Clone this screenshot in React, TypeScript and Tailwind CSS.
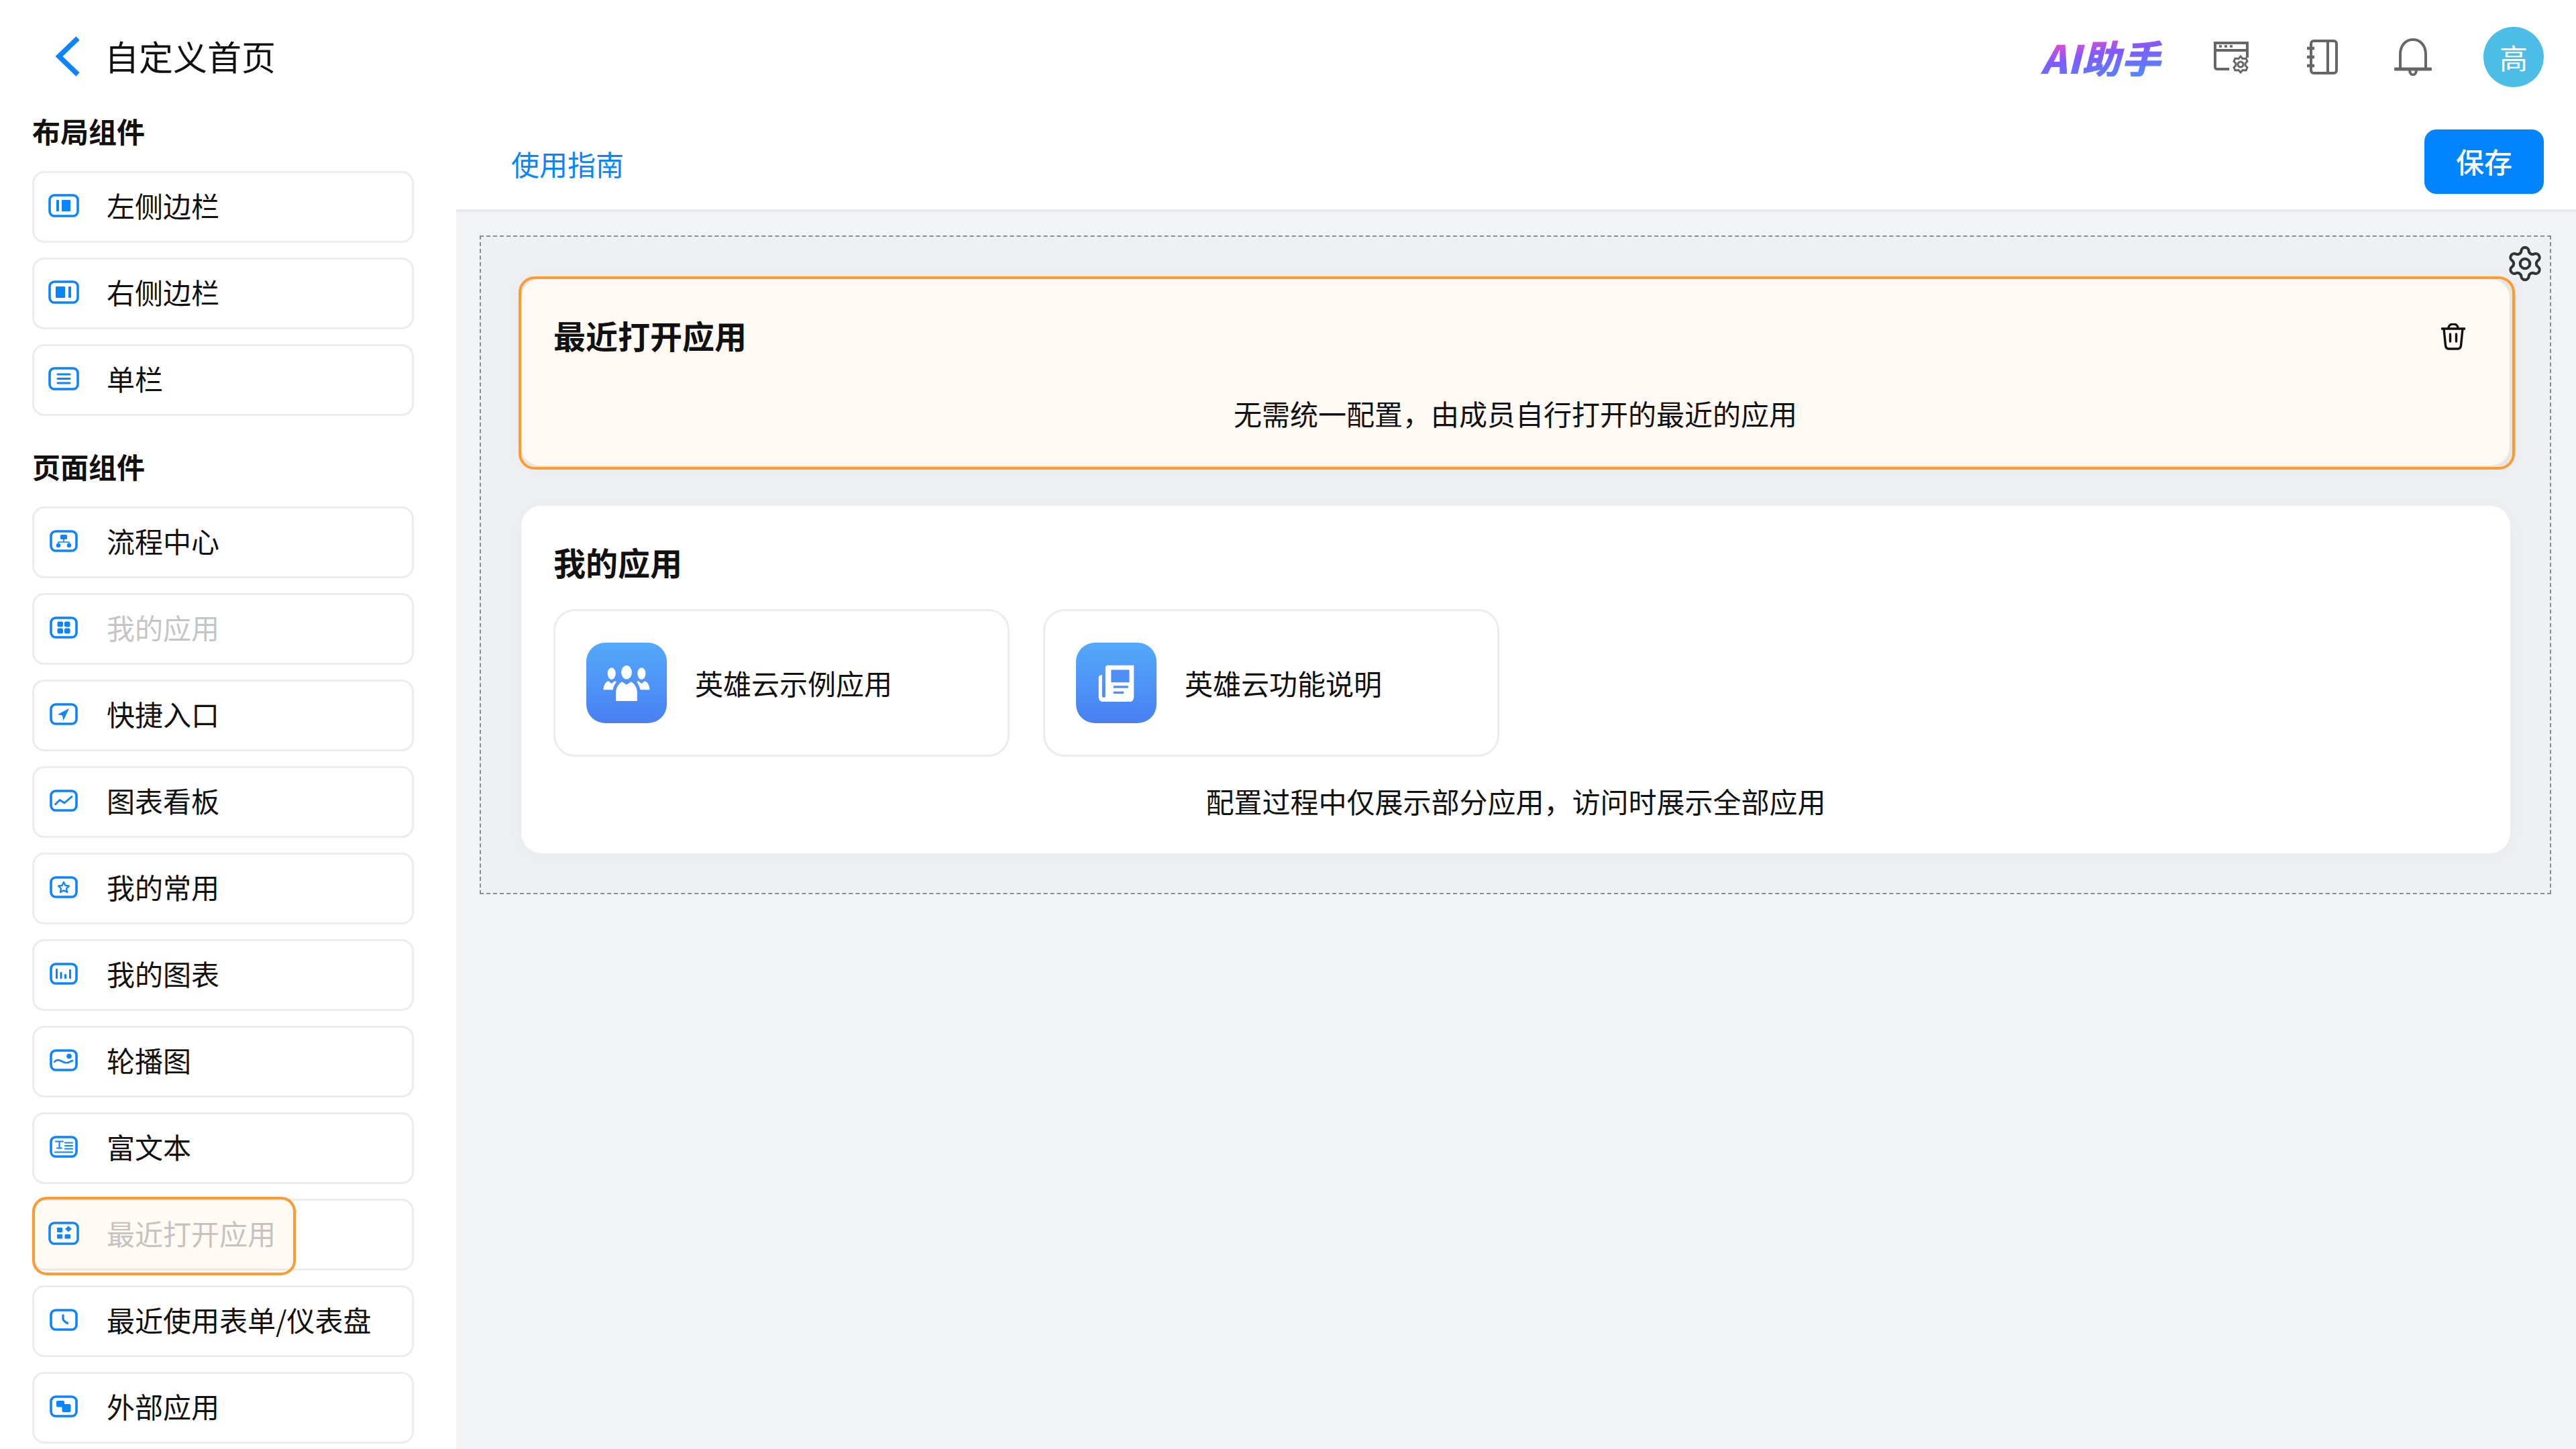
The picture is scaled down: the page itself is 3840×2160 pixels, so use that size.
import React from 'react';
import { Settings } from 'lucide-react';

const FONT = '"Noto Sans CJK SC", "Noto Sans", sans-serif';

// small framed icon used on every component tile
const TileIcon = ({ wide, children }: { wide?: boolean; children?: React.ReactNode }) => (
  <svg
    width={wide ? 46 : 42}
    height={wide ? 35 : 33}
    viewBox={wide ? '0 0 46 35' : '0 0 42 33'}
    className="shrink-0 text-[#0a84ff]"
    fill="currentColor"
  >
    <rect
      x="2"
      y="2"
      width={wide ? 42 : 38}
      height={wide ? 31 : 29}
      rx="7"
      fill="none"
      stroke="currentColor"
      strokeWidth="3.6"
    />
    {children}
  </svg>
);

const line = { fill: 'none', stroke: 'currentColor', strokeLinecap: 'round', strokeLinejoin: 'round' } as const;

const layoutItems = [
  {
    label: '左侧边栏',
    icon: (
      <TileIcon wide>
        <rect x="12" y="9" width="4" height="17" rx="1" />
        <rect x="20" y="9" width="13" height="17" rx="1" />
      </TileIcon>
    ),
  },
  {
    label: '右侧边栏',
    icon: (
      <TileIcon wide>
        <rect x="11" y="9" width="14" height="17" rx="1" />
        <rect x="30" y="9" width="4" height="17" rx="1" />
      </TileIcon>
    ),
  },
  {
    label: '单栏',
    icon: (
      <TileIcon wide>
        <g {...line} strokeWidth="3">
          <path d="M14 11h18M14 17.5h18M14 24h18" />
        </g>
      </TileIcon>
    ),
  },
];

const pageItems = [
  {
    label: '流程中心',
    icon: (
      <TileIcon>
        <rect x="16" y="7" width="10" height="7" rx="1.5" />
        <circle cx="13" cy="23" r="3.2" />
        <circle cx="29" cy="23" r="3.2" />
        <path d="M21 14v4M13 21v-3h16v3" {...line} strokeWidth="1.6" />
      </TileIcon>
    ),
  },
  {
    label: '我的应用',
    muted: true,
    icon: (
      <TileIcon>
        <rect x="11.5" y="7.5" width="8.5" height="8" rx="2" />
        <rect x="22" y="7.5" width="8.5" height="8" rx="2" />
        <rect x="11.5" y="17.5" width="8.5" height="8" rx="2" />
        <rect x="22" y="17.5" width="8.5" height="8" rx="2" />
      </TileIcon>
    ),
  },
  {
    label: '快捷入口',
    icon: (
      <TileIcon>
        <path d="M29 8 12 17l7 1.500L20.500 26z" />
      </TileIcon>
    ),
  },
  {
    label: '图表看板',
    icon: (
      <TileIcon>
        <path d="M8.500 22 15 15.500l7 4.500 11-9.500" {...line} strokeWidth="2.800" />
      </TileIcon>
    ),
  },
  {
    label: '我的常用',
    icon: (
      <TileIcon>
        <path d="m21 9 2.400 5 5.600.7-4 3.800 1 5.500-5-2.700-5 2.700 1-5.500-4-3.800 5.600-.7z" {...line} strokeWidth="2.300" />
      </TileIcon>
    ),
  },
  {
    label: '我的图表',
    icon: (
      <TileIcon>
        <rect x="9" y="9" width="3" height="15" rx="1" />
        <rect x="15.500" y="14" width="3" height="10" rx="1" />
        <rect x="22" y="17" width="3" height="7" rx="1" />
        <rect x="29" y="10" width="3" height="14" rx="1" />
      </TileIcon>
    ),
  },
  {
    label: '轮播图',
    icon: (
      <TileIcon>
        <circle cx="29" cy="10.500" r="3.800" />
        <path d="M7 19c3-3.500 6.500-3.500 10-1.500s7 3.500 10 2.500 5-2 7-3" {...line} strokeWidth="2.600" />
      </TileIcon>
    ),
  },
  {
    label: '富文本',
    icon: (
      <TileIcon>
        <path d="M9 8.500h11M14.500 8.500v10M11 18.500h7M23 10.500h11M23 15h11M23 19.500h11M8 24.500h26" {...line} strokeWidth="2.200" />
      </TileIcon>
    ),
  },
  {
    label: '最近打开应用',
    muted: true,
    dragging: true,
    icon: (
      <TileIcon wide>
        <rect x="13" y="9" width="8" height="7" rx="1" />
        <path d="m30 6.500 5 4.500-5 4.500-5-4.500z" />
        <rect x="13" y="19" width="8" height="6.500" rx="1" />
        <rect x="24.500" y="19" width="8.500" height="6.500" rx="1" />
      </TileIcon>
    ),
  },
  {
    label: '最近使用表单/仪表盘',
    icon: (
      <TileIcon>
        <path d="M20 9.500v5.500c0 2 3 4.500 6.500 6.500" {...line} strokeWidth="3.200" />
      </TileIcon>
    ),
  },
  {
    label: '外部应用',
    icon: (
      <TileIcon>
        <rect x="10" y="8" width="12" height="9.500" rx="2" />
        <rect x="18.500" y="13" width="13" height="12" rx="2" />
      </TileIcon>
    ),
  },
];

type Item = { label: string; icon: React.ReactNode; muted?: boolean; dragging?: boolean };

const Tile = ({ item }: { item: Item }) => (
  <div className="relative flex h-[107px] items-center rounded-[18px] border-[3px] border-[#ececee] bg-white pb-[5px] pl-[21px]">
    <div className="mr-[41px] flex w-[46px] shrink-0 items-center justify-center">{item.icon}</div>
    <span className={`text-[42px] leading-none ${item.muted ? 'text-[#c4c5c9]' : 'text-[#111]'}`}>{item.label}</span>
    {item.dragging && (
      <div className="absolute top-[-6px] left-[-3px] h-[117px] w-[393px] rounded-[22px] border-[4px] border-[#ff9a2e] bg-[#ff9a2e]/5" />
    )}
  </div>
);

const SectionTitle = ({ children, className = '' }: { children: React.ReactNode; className?: string }) => (
  <h2 className={`mb-[33px] -mt-[2px] text-[42px] leading-[54px] font-bold text-[#111] ${className}`}>{children}</h2>
);

const AppCard = ({ icon, name }: { icon: React.ReactNode; name: string }) => (
  <div className="flex h-[220px] w-[680px] items-center gap-[42px] rounded-[32px] border-[3px] border-[#ececee] bg-white pl-[46px]">
    <div className="flex size-[120px] shrink-0 items-center justify-center rounded-[28px] bg-linear-to-b from-[#54a9fb] to-[#497ff2]">
      {icon}
    </div>
    <span className="text-[42px] leading-none text-[#111]">{name}</span>
  </div>
);

export default function App() {
  return (
    <div className="flex h-[2160px] w-[3840px] flex-col overflow-hidden bg-white" style={{ fontFamily: FONT }}>
      <header className="flex h-[170px] shrink-0 items-center pr-[48px] pl-[83px]">
        <svg width="36" height="60" viewBox="0 0 36 60" fill="none" stroke="#0a84ff" strokeWidth="7.500" className="mr-[37px] mb-[2px] shrink-0">
          <path d="M33 3 5 30l28 27" />
        </svg>
        <h1 className="mb-[4px] text-[51px] leading-none font-normal text-[#111]">自定义首页</h1>

        <div className="ml-auto flex items-center">
          <span className="mr-[74px] bg-[linear-gradient(170deg,#ff48c4_8%,#7f5aff_45%,#4a90ff_100%)] bg-clip-text px-[2px] text-[58px] leading-none font-black tracking-[1px] text-transparent italic">
            AI助手
          </span>
          <svg width="56" height="52" viewBox="0 0 56 52" fill="none" stroke="#666" strokeWidth="4" className="mr-[81px] ml-[2px]">
            <path d="M24 44H6a3 3 0 0 1-3-3V5h48v22" />
            <path d="M3 16h48" />
            <path d="M9 10h4M17 10h4M25 10h4" strokeWidth="3.500" />
            <circle cx="41" cy="37" r="4" strokeWidth="3" />
            <path d="m41 25 3 3.500 5-.5 2 4.500-3 3v3l3 3-2 4.500-5-.5-3 3.500-3-3.500-5 .5-2-4.500 3-3v-3l-3-3 2-4.500 5 .5z" strokeWidth="3" />
          </svg>
          <svg width="48" height="52" viewBox="0 0 48 52" fill="none" stroke="#666" strokeWidth="4" className="mr-[83px] ml-[2px]">
            <rect x="7" y="2" width="38" height="48" rx="4" />
            <path d="M32 2v48" />
            <path d="M1 13h11M1 26h11M1 39h11" strokeWidth="4.500" />
          </svg>
          <svg width="56" height="56" viewBox="0 0 56 56" fill="none" stroke="#666" strokeWidth="4" className="mr-[77px]">
            <path d="M9 46V24C9 11 17 2 28 2s19 9 19 22v22" />
            <path d="M2 46h52" strokeWidth="5" strokeLinecap="round" />
            <path d="M23 47c0 10 10 10 10 0" />
          </svg>
          <div className="flex size-[90px] items-center justify-center rounded-full bg-[#4cbde6] pb-[2px] text-[42px] text-white">高</div>
        </div>
      </header>

      <div className="flex min-h-0 flex-1">
        <aside className="w-[680px] shrink-0 bg-white pr-[63px] pl-[48px]">
          <SectionTitle>布局组件</SectionTitle>
          <div className="flex flex-col gap-[22px]">
            {layoutItems.map((item) => (
              <Tile key={item.label} item={item} />
            ))}
          </div>
          <SectionTitle className="mt-[48px]">页面组件</SectionTitle>
          <div className="flex flex-col gap-[22px]">
            {pageItems.map((item) => (
              <Tile key={item.label} item={item} />
            ))}
          </div>
        </aside>

        <main className="flex min-w-0 flex-1 flex-col bg-[#f2f3f6]">
          <div className="flex h-[146px] shrink-0 items-center justify-between border-b-[4px] border-[#e8e9ec] bg-white pr-[48px] pl-[82px]">
            <span className="pt-[5px] text-[42px] leading-none text-[#0a84ff]">使用指南</span>
            <button className="flex h-[96px] w-[178px] items-center justify-center rounded-[18px] bg-[#0084ff] pb-[4px] text-[42px] font-medium text-white">
              保存
            </button>
          </div>

          <div className="pt-[35px] pr-[37px] pl-[35px]">
            <div className="relative flex flex-col gap-[54px] border-2 border-dashed border-[#8c8c8c] bg-[#eef0f4] pt-[59px] pr-[52px] pb-[59px] pl-[56px]">
              <Settings size={58} strokeWidth={1.7} className="absolute top-[11px] right-[8px] text-[#333]" />

              <section className="relative h-[288px] rounded-[24px] border-[4px] border-[#ff9a2e] bg-[#e9e5e1] shadow-[0_0_30px_rgba(0,0,0,0.03)]">
                <div className="flex h-[278px] w-[2964px] flex-col rounded-[28px] bg-[#fef9f3] pl-[48px]">
                  <h3 className="mt-[59px] text-[48px] leading-none font-bold text-[#111]">最近打开应用</h3>
                  <p className="mt-[72px] pr-[48px] text-center text-[42px] leading-none text-[#111]">
                    无需统一配置，由成员自行打开的最近的应用
                  </p>
                </div>
                <svg width="36" height="40" viewBox="0 0 36 40" fill="none" stroke="#111" strokeWidth="3.400" className="absolute top-[66px] right-[70px]">
                  <path d="M1 8h34" strokeLinecap="round" />
                  <path d="M11 7c0-8 14-8 14 0" />
                  <path d="M4 8l2.500 25c.3 3 2 5 5 5h13c3 0 4.700-2 5-5L32 8" />
                  <path d="M13.500 16v11M22.500 16v11" strokeLinecap="round" />
                </svg>
              </section>

              <section className="mr-[7px] ml-[4px] h-[518px] rounded-[30px] bg-white pt-[59px] pl-[48px] shadow-[0_4px_30px_rgba(0,0,0,0.04)]">
                <h3 className="text-[48px] leading-none font-bold text-[#111]">我的应用</h3>
                <div className="mt-[47px] flex gap-[50px]">
                  <AppCard
                    name="英雄云示例应用"
                    icon={
                      <svg width="72" height="54" viewBox="0 0 74 58" fill="white">
                        <ellipse cx="37" cy="12" rx="8.500" ry="11" />
                        <ellipse cx="13" cy="14" rx="6.500" ry="9.500" />
                        <ellipse cx="61" cy="14" rx="6.500" ry="9.500" />
                        <path d="M20 58V44c0-9 6-15 10-17l7 5 7-5c4 2 10 8 10 17v14z" />
                        <path d="M0 40c0-8 4-13 8-14l5 4 5-4 3 1c-3 4-5 8-6 13z" />
                        <path d="M74 40c0-8-4-13-8-14l-5 4-5-4-3 1c3 4 5 8 6 13z" />
                      </svg>
                    }
                  />
                  <AppCard
                    name="英雄云功能说明"
                    icon={
                      <svg width="62" height="56" viewBox="0 0 62 66" fill="none">
                        <path d="M16 2h46v56c0 4-3 8-6 8H8c-5 0-8-3-8-8V24c0-3 3-5 6-5v38c0 2 6 2 6 0V6c0-2 2-4 4-4z" fill="white" />
                        <rect x="22" y="10" width="32" height="22" fill="#4f8ef5" />
                        <rect x="26" y="38" width="26" height="4" fill="#4f8ef5" />
                        <rect x="26" y="48" width="18" height="4" fill="#4f8ef5" />
                      </svg>
                    }
                  />
                </div>
                <p className="mt-[45px] pr-[48px] text-center text-[42px] leading-none text-[#111]">
                  配置过程中仅展示部分应用，访问时展示全部应用
                </p>
              </section>
            </div>
          </div>
        </main>
      </div>
    </div>
  );
}
